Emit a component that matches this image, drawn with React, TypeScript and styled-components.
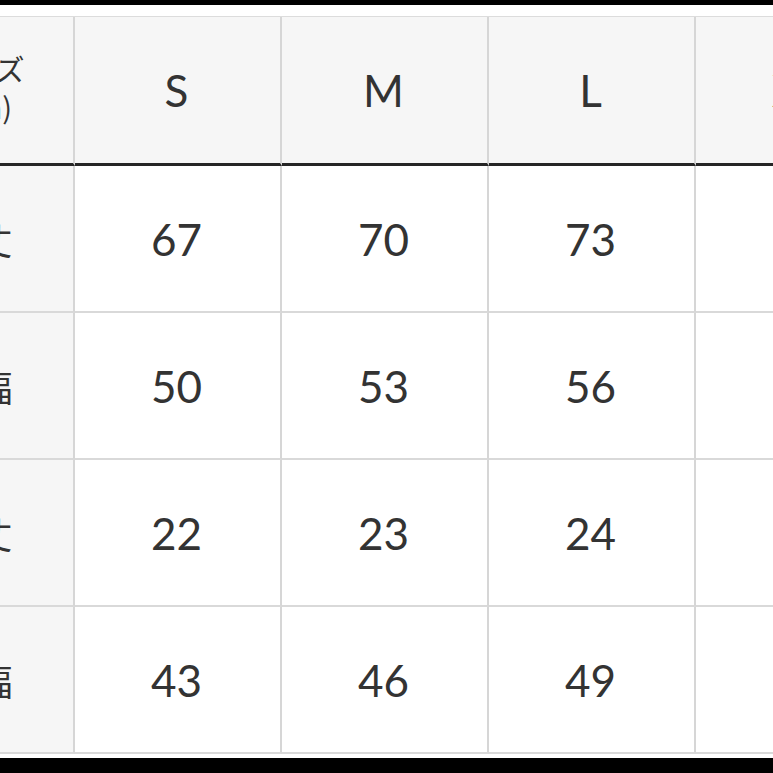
import React from 'react';
import styled, { createGlobalStyle } from 'styled-components';

const sizes = ['S', 'M', 'L', 'XL'];

const rows: { label: string; values: string[] }[] = [
  { label: '着丈', values: ['67', '70', '73', '76'] },
  { label: '身幅', values: ['50', '53', '56', '59'] },
  { label: '袖丈', values: ['22', '23', '24', '25'] },
  { label: '肩幅', values: ['43', '46', '49', '52'] },
];

const App: React.FC = () => {
  return (
    <>
      <GlobalStyle />
      <Frame>
        <SizeGrid>
          <Cell $head $label>
            <HeadLabel>
              サイズ
              <br />
              (cm)
            </HeadLabel>
          </Cell>
          {sizes.map((s) => (
            <Cell key={s} $head>
              {s}
            </Cell>
          ))}
          {rows.map((row) => (
            <React.Fragment key={row.label}>
              <Cell $label>
                <RowLabel>{row.label}</RowLabel>
              </Cell>
              {row.values.map((v, i) => (
                <Cell key={i}>{v}</Cell>
              ))}
            </React.Fragment>
          ))}
        </SizeGrid>
      </Frame>
    </>
  );
};

export default App;

const GlobalStyle = createGlobalStyle`
  html, body {
    margin: 0;
    padding: 0;
    background: #000;
    overflow: hidden;
  }
  body {
    width: 773px;
    height: 773px;
  }
`;

const Frame = styled.div`
  margin-top: 5px;
  height: 753px;
  padding-top: 11px;
  box-sizing: border-box;
  background: #fff;
  overflow: hidden;
`;

const SizeGrid = styled.div`
  display: grid;
  grid-template-columns: repeat(5, 207px);
  grid-template-rows: 149px repeat(4, 147px);
  width: max-content;
  margin-left: -132px;
  border-top: 1px solid #dcdcdc;
`;

const Cell = styled.div<{ $head?: boolean; $label?: boolean }>`
  display: flex;
  align-items: center;
  justify-content: center;
  box-sizing: border-box;
  padding-right: 2px;
  border-right: 2px solid #d6d6d6;
  border-bottom: ${(p) => (p.$head ? '3px solid #262626' : '2px solid #d9d9d9')};
  background: ${(p) => (p.$head || p.$label ? '#f6f6f6' : '#fff')};
  color: #333;
  font-family: Lato, 'Noto Sans CJK JP', sans-serif;
  font-size: 44px;
  font-weight: 400;
`;

const HeadLabel = styled.div`
  font-family: 'Noto Sans CJK JP', sans-serif;
  font-size: 29px;
  line-height: 38px;
  text-align: center;
  margin: -6px 0 0 24px;
`;

const RowLabel = styled.div`
  font-family: 'Noto Sans CJK JP', sans-serif;
  font-size: 36px;
  margin-left: 14px;
`;
